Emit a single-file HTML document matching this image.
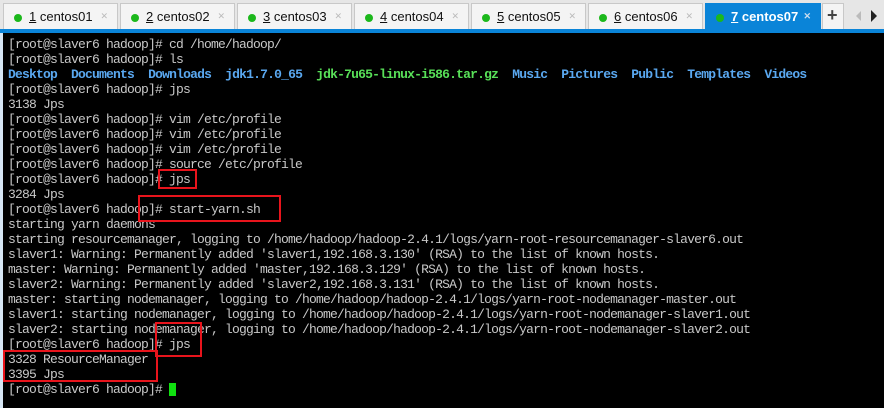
<!DOCTYPE html>
<html><head><meta charset="utf-8"><style>
*{margin:0;padding:0;box-sizing:border-box}
body{width:884px;height:408px;overflow:hidden;background:#e6e6e6;font-family:"Liberation Sans",sans-serif;position:relative}
.tab{position:absolute;top:3px;height:27px;background:#f4f4f4;border:1px solid #c8c8c8;border-bottom:none;font-size:13px;color:#111}
.tab .d{position:absolute;left:10px;top:10px;width:8px;height:8px;border-radius:50%;background:#1cb81c}
.tab .t{position:absolute;left:25px;top:5px}
.tab .x{position:absolute;right:9px;top:7px;color:#bbb;font-size:9px}
.tab.a{background:#0a84d8;color:#fff;border-color:#0a84d8;font-weight:bold}
.tab.a .x{color:#cde}
.bar{position:absolute;left:0;top:29px;width:884px;height:4px;background:#0a84d8}
.term{position:absolute;left:3px;top:33px;width:881px;height:375px;background:#000}
.lb{position:absolute;left:0;top:33px;width:3px;height:375px;background:#d6e6f4}
pre{position:absolute;left:8px;top:37px;font-family:"Liberation Mono",monospace;font-size:13px;letter-spacing:-0.8px;line-height:15px;color:#c8c8c8}
.b{color:#5aa8f0;font-weight:bold}.g{color:#58e058;font-weight:bold}
.r{position:absolute;border:2px solid #e8141c}
.cur{position:absolute;left:169px;top:383px;width:7px;height:13px;background:#10e010}
</style></head><body>
<div class="tab" style="left:3px;width:115px"><span class="d"></span><span class="t"><u>1</u> centos01</span><span class="x">✕</span></div>
<div class="tab" style="left:120px;width:115px"><span class="d"></span><span class="t"><u>2</u> centos02</span><span class="x">✕</span></div>
<div class="tab" style="left:237px;width:115px"><span class="d"></span><span class="t"><u>3</u> centos03</span><span class="x">✕</span></div>
<div class="tab" style="left:354px;width:115px"><span class="d"></span><span class="t"><u>4</u> centos04</span><span class="x">✕</span></div>
<div class="tab" style="left:471px;width:115px"><span class="d"></span><span class="t"><u>5</u> centos05</span><span class="x">✕</span></div>
<div class="tab" style="left:588px;width:115px"><span class="d"></span><span class="t"><u>6</u> centos06</span><span class="x">✕</span></div>
<div class="tab a" style="left:705px;width:116px"><span class="d"></span><span class="t"><u>7</u> centos07</span><span class="x">✕</span></div>
<div class="tab" style="left:822px;width:22px;font-size:18px;font-weight:bold;color:#444"><span style="position:absolute;left:4px;top:1px">+</span></div>
<div style="position:absolute;left:856px;top:11px;width:0;height:0;border-top:5px solid transparent;border-bottom:5px solid transparent;border-right:5px solid #bbb"></div>
<div style="position:absolute;left:871px;top:10px;width:0;height:0;border-top:6px solid transparent;border-bottom:6px solid transparent;border-left:6px solid #222"></div>
<div class="bar"></div>
<div class="term"></div><div class="lb"></div>
<pre>[root@slaver6 hadoop]# cd /home/hadoop/
[root@slaver6 hadoop]# ls
<span class="b">Desktop</span>  <span class="b">Documents</span>  <span class="b">Downloads</span>  <span class="b">jdk1.7.0_65</span>  <span class="g">jdk-7u65-linux-i586.tar.gz</span>  <span class="b">Music</span>  <span class="b">Pictures</span>  <span class="b">Public</span>  <span class="b">Templates</span>  <span class="b">Videos</span>
[root@slaver6 hadoop]# jps
3138 Jps
[root@slaver6 hadoop]# vim /etc/profile
[root@slaver6 hadoop]# vim /etc/profile
[root@slaver6 hadoop]# vim /etc/profile
[root@slaver6 hadoop]# source /etc/profile
[root@slaver6 hadoop]# jps
3284 Jps
[root@slaver6 hadoop]# start-yarn.sh
starting yarn daemons
starting resourcemanager, logging to /home/hadoop/hadoop-2.4.1/logs/yarn-root-resourcemanager-slaver6.out
slaver1: Warning: Permanently added 'slaver1,192.168.3.130' (RSA) to the list of known hosts.
master: Warning: Permanently added 'master,192.168.3.129' (RSA) to the list of known hosts.
slaver2: Warning: Permanently added 'slaver2,192.168.3.131' (RSA) to the list of known hosts.
master: starting nodemanager, logging to /home/hadoop/hadoop-2.4.1/logs/yarn-root-nodemanager-master.out
slaver1: starting nodemanager, logging to /home/hadoop/hadoop-2.4.1/logs/yarn-root-nodemanager-slaver1.out
slaver2: starting nodemanager, logging to /home/hadoop/hadoop-2.4.1/logs/yarn-root-nodemanager-slaver2.out
[root@slaver6 hadoop]# jps
3328 ResourceManager
3395 Jps
[root@slaver6 hadoop]# </pre>
<div class="r" style="left:158px;top:169px;width:39px;height:20px"></div>
<div class="r" style="left:138px;top:195px;width:143px;height:27px"></div>
<div class="r" style="left:155px;top:322px;width:47px;height:35px"></div>
<div class="r" style="left:3px;top:350px;width:155px;height:32px"></div>
<div class="cur"></div>
</body></html>
